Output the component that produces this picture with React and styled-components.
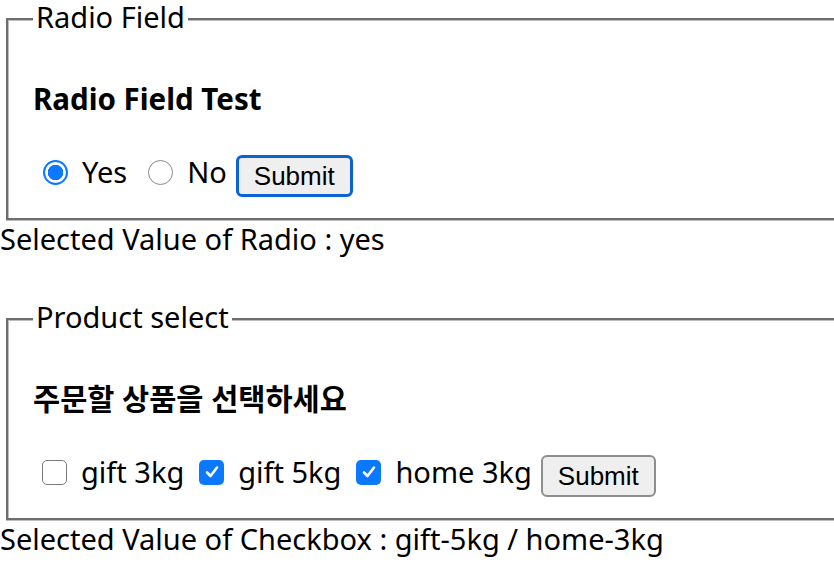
import { useState } from "react";
import styled, { createGlobalStyle } from "styled-components";

const GlobalStyle = createGlobalStyle`
  html, body {
    margin: 0;
    padding: 0;
    background: #fff;
  }
  body {
    font-family: "Noto Sans", "Noto Sans CJK KR", sans-serif;
    font-size: 29px;
    color: #000;
    overflow: hidden;
  }
`;

const Page = styled.div`
  width: 834px;
  overflow: hidden;
`;

const Section = styled.div`
  margin-bottom: ${(p) => p.$gap || 0}px;
`;

/* groove look: dark 2px line with a light 1px line beside it */
const Field = styled.fieldset`
  margin: 0 -40px 0 6px;
  border: 2px solid #6e6e6e;
  box-shadow: inset 0 1px 0 #bdbdbd, inset 1px 0 0 #bdbdbd, 0 1px 0 #bdbdbd;
  padding: 0 0 20px 25px;
  min-inline-size: auto;
`;

const Legend = styled.legend`
  padding: 0 3px 4px;
  line-height: 34px;
  background: #fff;
`;

const Title = styled.h3`
  margin: 41px 0 35px;
  font-size: 29.5px;
  line-height: 40px;
  font-weight: 700;
`;

const Row = styled.div`
  display: flex;
  align-items: center;
  height: 44px;
`;

const Option = styled.label`
  display: flex;
  align-items: center;
  padding-bottom: 8px;
  margin-left: ${(p) => (p.$first ? p.$start : p.$gap)}px;
  line-height: 36px;
  cursor: pointer;
`;

const HiddenInput = styled.input`
  position: absolute;
  opacity: 0;
  width: 0;
  height: 0;
  margin: 0;
`;

const RadioDot = styled.span`
  box-sizing: border-box;
  width: 25px;
  height: 25px;
  border-radius: 50%;
  border: ${(p) => (p.$on ? "2.5px solid #0a78ff" : "1.5px solid #8a8a8a")};
  background: ${(p) =>
    p.$on ? "radial-gradient(circle, #0a78ff 0 7.5px, #fff 8px)" : "#fff"};
  margin-right: 14px;
  flex: none;
`;

const CheckBox = styled.span`
  box-sizing: border-box;
  width: 25px;
  height: 25px;
  border-radius: 5px;
  border: ${(p) => (p.$on ? "none" : "1.5px solid #7a7a7a")};
  background: ${(p) => (p.$on ? "#0a78ff" : "#fff")};
  margin-right: 14px;
  display: flex;
  align-items: center;
  justify-content: center;
  flex: none;
`;

const Submit = styled.button`
  box-sizing: border-box;
  height: 42px;
  margin-left: 9px;
  padding: 0 15px;
  font-family: "Liberation Sans", Arial, sans-serif;
  font-size: 26px;
  color: #000;
  background: #efefef;
  border: ${(p) => (p.$focused ? "3px solid #0b62d4" : "2px solid #8e8e8e")};
  border-radius: 6px;
  outline: none;
`;

const Result = styled.div`
  margin-top: 1px;
  line-height: 36px;
`;

function Check() {
  return (
    <svg width="16" height="16" viewBox="0 0 16 16">
      <path
        d="M3 8.5 L6.5 12 L13 3.5"
        fill="none"
        stroke="#fff"
        strokeWidth="2.6"
        strokeLinecap="round"
        strokeLinejoin="round"
      />
    </svg>
  );
}

const products = [
  { value: "gift-3kg", label: "gift 3kg" },
  { value: "gift-5kg", label: "gift 5kg" },
  { value: "home-3kg", label: "home 3kg" },
];

export default function App() {
  const [radio, setRadio] = useState("yes");
  const [picked, setPicked] = useState(["gift-5kg", "home-3kg"]);

  const toggle = (value) =>
    setPicked((prev) =>
      prev.includes(value) ? prev.filter((v) => v !== value) : [...prev, value]
    );

  return (
    <Page>
      <GlobalStyle />
      <Section $gap={43}>
        <Field>
          <Legend>Radio Field</Legend>
          <Title>Radio Field Test</Title>
          <Row>
            {["yes", "no"].map((v, i) => (
              <Option key={v} $first={i === 0} $start={10} $gap={21}>
                <HiddenInput
                  type="radio"
                  name="answer"
                  checked={radio === v}
                  onChange={() => setRadio(v)}
                />
                <RadioDot $on={radio === v} />
                {v === "yes" ? "Yes" : "No"}
              </Option>
            ))}
            <Submit $focused>Submit</Submit>
          </Row>
        </Field>
        <Result>Selected Value of Radio : {radio}</Result>
      </Section>
      <Section>
        <Field>
          <Legend>Product select</Legend>
          <Title>주문할 상품을 선택하세요</Title>
          <Row>
            {products.map((p, i) => {
              const on = picked.includes(p.value);
              return (
                <Option key={p.value} $first={i === 0} $start={9} $gap={15}>
                  <HiddenInput
                    type="checkbox"
                    checked={on}
                    onChange={() => toggle(p.value)}
                  />
                  <CheckBox $on={on}>{on && <Check />}</CheckBox>
                  {p.label}
                </Option>
              );
            })}
            <Submit>Submit</Submit>
          </Row>
        </Field>
        <Result>
          Selected Value of Checkbox :{" "}
          {products
            .filter((p) => picked.includes(p.value))
            .map((p) => p.value)
            .join(" / ")}
        </Result>
      </Section>
    </Page>
  );
}
